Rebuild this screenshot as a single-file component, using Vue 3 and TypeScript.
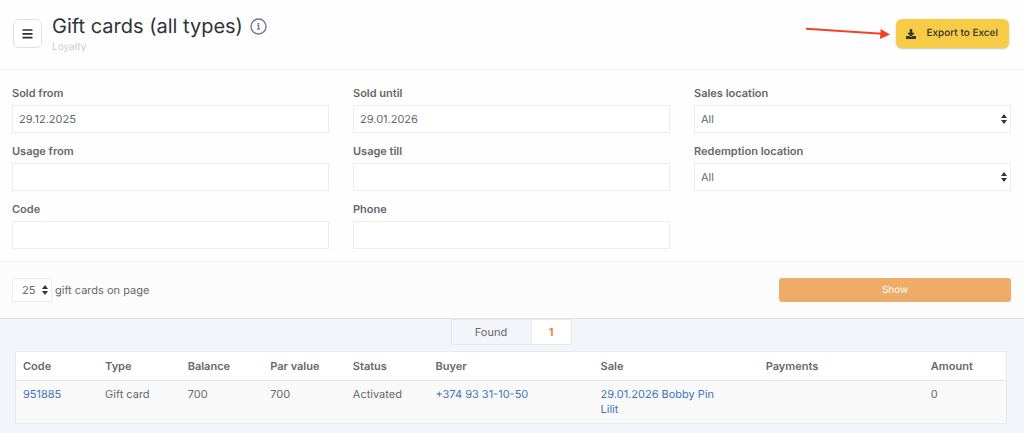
<script setup lang="ts">
import { ref } from 'vue'

interface Field {
  id: string
  label: string
  kind: 'text' | 'select'
}

interface Column {
  title: string
  span: number
}

const fields: Field[] = [
  { id: 'sold-from', label: 'Sold from', kind: 'text' },
  { id: 'sold-until', label: 'Sold until', kind: 'text' },
  { id: 'sales-location', label: 'Sales location', kind: 'select' },
  { id: 'usage-from', label: 'Usage from', kind: 'text' },
  { id: 'usage-till', label: 'Usage till', kind: 'text' },
  { id: 'redemption-location', label: 'Redemption location', kind: 'select' },
  { id: 'code', label: 'Code', kind: 'text' },
  { id: 'phone', label: 'Phone', kind: 'text' },
]

const values = ref<Record<string, string>>({
  'sold-from': '29.12.2025',
  'sold-until': '29.01.2026',
  'sales-location': 'All',
  'usage-from': '',
  'usage-till': '',
  'redemption-location': 'All',
  code: '',
  phone: '',
})

const pageSize = ref('25')

const columns: Column[] = [
  { title: 'Code', span: 1 },
  { title: 'Type', span: 1 },
  { title: 'Balance', span: 1 },
  { title: 'Par value', span: 1 },
  { title: 'Status', span: 1 },
  { title: 'Buyer', span: 2 },
  { title: 'Sale', span: 2 },
  { title: 'Payments', span: 2 },
  { title: 'Amount', span: 1 },
]
const totalSpan = columns.reduce((sum, c) => sum + c.span, 0)
</script>

<template>
  <div class="page">
    <header class="header">
      <button class="menu" type="button" aria-label="Menu">
        <svg width="11" height="10" viewBox="0 0 11 10" aria-hidden="true">
          <path d="M0.5 1h10M0.5 4.8h10M0.5 8.6h10" stroke="#2b2f36" stroke-width="1.7" />
        </svg>
      </button>
      <div class="heading">
        <div class="title-line">
          <h1>Gift cards (all types)</h1>
          <svg class="info" width="17" height="17" viewBox="0 0 17 17" aria-hidden="true">
            <circle cx="8.5" cy="8.5" r="7.5" fill="none" stroke="#77778a" stroke-width="1.4" />
            <circle cx="8.4" cy="5.7" r="1" fill="#77778a" />
            <path d="M7.2 7.7h1.5v3.2M7 11.1h3" fill="none" stroke="#77778a" stroke-width="1.2" />
          </svg>
        </div>
        <p>Loyalty</p>
      </div>
      <svg class="arrow" width="84" height="14" viewBox="0 0 84 14" aria-hidden="true">
        <path d="M0 2.7 76 7.8" stroke="#ee4328" stroke-width="2" />
        <path d="M74.6 3 84 8.5 74 13z" fill="#ee4328" />
      </svg>
      <button class="export" type="button">
        <svg width="10" height="10" viewBox="0 0 512 512" aria-hidden="true">
          <path
            fill="#33342c"
            d="M216 0h80c13 0 24 11 24 24v168h88c18 0 27 21 14 34L270 378c-7 7-20 7-27 0L90 226c-13-13-4-34 14-34h88V24c0-13 11-24 24-24zm296 376v112c0 13-11 24-24 24H24c-13 0-24-11-24-24V376c0-13 11-24 24-24h147l49 49c20 20 52 20 72 0l49-49h147c13 0 24 11 24 24z"
          />
        </svg>
        <span>Export to Excel</span>
      </button>
    </header>

    <form @submit.prevent>
      <div class="filters">
        <div v-for="f in fields" :key="f.id" class="field">
          <label :for="f.id">{{ f.label }}</label>
          <input v-if="f.kind === 'text'" :id="f.id" v-model="values[f.id]" type="text" />
          <div v-else class="select">
            <select :id="f.id" v-model="values[f.id]">
              <option>All</option>
            </select>
            <svg width="6" height="10" viewBox="0 0 6 10" aria-hidden="true">
              <path d="M0 4 3 0l3 4zM0 6h6L3 10z" fill="#333" />
            </svg>
          </div>
        </div>
      </div>

      <div class="actions">
        <div class="per-page">
          <div class="select small">
            <select id="page-size" v-model="pageSize">
              <option>25</option>
            </select>
            <svg width="6" height="10" viewBox="0 0 6 10" aria-hidden="true">
              <path d="M0 4 3 0l3 4zM0 6h6L3 10z" fill="#333" />
            </svg>
          </div>
          <label for="page-size">gift cards on page</label>
        </div>
        <button class="show" type="submit">Show</button>
      </div>
    </form>

    <main class="results">
      <div class="found">
        <span>Found</span>
        <strong>1</strong>
      </div>
      <table>
        <colgroup>
          <col v-for="c in columns" :key="c.title" :style="{ width: (c.span / totalSpan) * 100 + '%' }" />
        </colgroup>
        <thead>
          <tr>
            <th v-for="c in columns" :key="c.title" scope="col">{{ c.title }}</th>
          </tr>
        </thead>
        <tbody>
          <tr>
            <td><a href="#951885">951885</a></td>
            <td>Gift card</td>
            <td>700</td>
            <td>700</td>
            <td>Activated</td>
            <td><a href="#buyer">+374 93 31-10-50</a></td>
            <td><a href="#sale">29.01.2026 Bobby Pin<br />Lilit</a></td>
            <td></td>
            <td>0</td>
          </tr>
        </tbody>
      </table>
    </main>
  </div>
</template>

<style>
body {
  background: #f3f5fa;
}
</style>

<style scoped>
.page,
.page * {
  box-sizing: border-box;
}
.page {
  font: 11px/15px Inter, 'Liberation Sans', sans-serif;
  text-rendering: geometricPrecision;
  color: #66686a;
}
button,
input,
select {
  font: inherit;
  text-rendering: inherit;
  color: inherit;
  margin: 0;
}
.header {
  display: flex;
  align-items: flex-start;
  padding: 14px 15px 14px 13px;
  background: #fefefe;
  border-bottom: 1px solid #f1f1f3;
}
.menu {
  display: flex;
  align-items: center;
  justify-content: center;
  width: 29px;
  height: 29px;
  margin-top: 5px;
  padding: 0;
  background: #fff;
  border: 1px solid #dfdfe9;
  border-radius: 6px;
}
.heading {
  flex: 1;
  margin-left: 10px;
}
.title-line {
  display: flex;
  align-items: center;
  gap: 7px;
}
h1 {
  margin: 0;
  font-size: 20px;
  line-height: 24px;
  font-weight: 400;
  color: #303438;
}
.heading p {
  margin: 2px 0 0;
  font-size: 10px;
  color: #cacad6;
}
.arrow {
  margin: 12px 6px 0 0;
}
.export {
  display: flex;
  align-items: center;
  gap: 11px;
  height: 29px;
  margin-top: 5px;
  padding: 0 11px 0 10px;
  font-size: 10px;
  font-weight: 500;
  color: #33342c;
  background: #f6cc46;
  border: 0;
  border-radius: 6px;
  box-shadow: 0 1px 2px rgba(80, 60, 0, 0.3);
}
.filters {
  display: grid;
  grid-template-columns: repeat(3, 1fr);
  gap: 10px 24px;
  padding: 15px 13px 12px 12px;
  background: #fefefe;
  border-bottom: 1px solid #f1f1f3;
}
.field label {
  display: block;
  margin-bottom: 4px;
  line-height: 16px;
  font-weight: 600;
}
.field input,
select {
  display: block;
  width: 100%;
  height: 28px;
  padding: 0 6px;
  background: #fff;
  border: 1px solid #ededed;
  border-radius: 0;
  outline: 0;
}
select {
  appearance: none;
}
.select {
  position: relative;
}
.select svg {
  position: absolute;
  right: 4px;
  top: calc(50% - 5px);
  pointer-events: none;
}
.small {
  width: 40px;
}
.small select {
  height: 24px;
  padding-left: 9px;
}
.actions {
  display: flex;
  align-items: center;
  justify-content: space-between;
  padding: 16px 13px 16px 12px;
  background: #fcfcfc;
  border-bottom: 1px solid #e3e3e5;
}
.per-page {
  display: flex;
  align-items: center;
  gap: 3px;
}
.show {
  width: 23.2%;
  height: 24px;
  font-size: 10px;
  color: #fff;
  background: #edad68;
  border: 0;
  border-radius: 3px;
}
.results {
  padding: 0 17px 10px 15px;
}
.found {
  display: flex;
  width: 121px;
  height: 26px;
  margin: 0 auto 6px;
  line-height: 24px;
  text-align: center;
  border: 1px solid #e8e9ec;
}
.found span {
  flex: 1;
  border-right: 1px solid #e8e9ec;
}
.found strong {
  width: 39px;
  font-weight: 700;
  color: #f2813c;
  background: #fff;
}
table {
  width: 100%;
  table-layout: fixed;
  border-collapse: collapse;
  background: #fff;
  border: 1px solid #e9e9ea;
}
th,
td {
  padding: 7px;
  text-align: left;
  vertical-align: top;
}
th {
  padding-bottom: 6px;
  font-weight: 600;
  border-bottom: 1px solid #e4e4e6;
}
td {
  padding: 6px 7px;
  background: #f9f9f9;
}
a {
  color: #3f75ba;
  text-decoration: none;
}
</style>
